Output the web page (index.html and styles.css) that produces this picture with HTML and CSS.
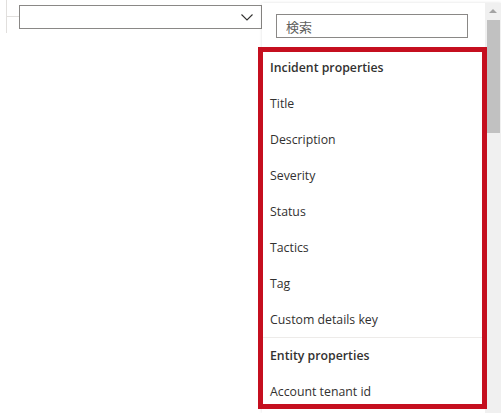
FILE: index.html
```html
<!DOCTYPE html>
<html lang="ja">
<head>
    <meta charset="UTF-8">
    <title>Dropdown</title>
    <link rel="stylesheet" href="styles.css">
</head>
<body>
    <div class="page">
        <div class="left">
            <div class="tree">
                <div class="tree-line"></div>
                <div class="tree-branch"></div>
            </div>
            <div class="select">
                <svg class="chevron" width="12" height="7" viewBox="0 0 12 7">
                    <path d="M0.5 0.5 L6 6 L11.5 0.5" fill="none" stroke="#323130" stroke-width="1.1"/>
                </svg>
            </div>
        </div>
        <div class="panel">
            <div class="content">
                <div class="search">
                    <input type="text" placeholder="検索">
                </div>
                <div class="list">
                    <div class="item header">Incident properties</div>
                    <div class="item">Title</div>
                    <div class="item">Description</div>
                    <div class="item">Severity</div>
                    <div class="item">Status</div>
                    <div class="item">Tactics</div>
                    <div class="item">Tag</div>
                    <div class="item">Custom details key</div>
                    <div class="divider"></div>
                    <div class="item header">Entity properties</div>
                    <div class="item">Account tenant id</div>
                    <div class="highlight"></div>
                </div>
            </div>
            <div class="scrollbar">
                <div class="arrow"></div>
                <div class="thumb"></div>
            </div>
        </div>
    </div>
</body>
</html>
```

FILE: styles.css
```css
body {
    margin: 0;
    font-family: "Open Sans", "Noto Sans CJK JP", sans-serif;
    color: #323130;
    background: #fff;
    overflow: hidden;
    height: 413px;
}
.page {
    display: flex;
    height: 413px;
}
.left {
    width: 262px;
    display: flex;
    align-items: flex-start;
}
.tree {
    width: 19px;
    height: 33px;
    position: relative;
}
.tree-line {
    margin-left: 6px;
    width: 1px;
    height: 33px;
    background: #e1dfdd;
}
.tree-branch {
    position: absolute;
    left: 7px;
    top: 16px;
    width: 12px;
    height: 1px;
    background: #e1dfdd;
}
.select {
    margin-top: 5px;
    width: 239px;
    height: 22px;
    border: 1px solid #8a8886;
    display: flex;
    align-items: center;
    justify-content: flex-end;
    padding-right: 7px;
    box-sizing: content-box;
}
.chevron {
    margin-right: 1px;
}
.panel {
    margin-top: 3px;
    flex: 1;
    display: flex;
    background: #fff;
    box-shadow: 0 0 3px rgba(0, 0, 0, 0.13);
}
.content {
    width: 223px;
}
.search {
    padding: 11px 0 0 14px;
}
.search input {
    width: 192px;
    height: 24px;
    box-sizing: border-box;
    border: 1px solid #8a8886;
    padding: 0 9px;
    font-family: "Noto Sans CJK JP", sans-serif;
    font-size: 13px;
    outline: none;
}
.search input::placeholder {
    color: #605e5c;
}
.list {
    margin-top: 12px;
    position: relative;
}
.item {
    height: 36px;
    line-height: 36px;
    padding-left: 8px;
    font-size: 12.3px;
    white-space: nowrap;
}
.header {
    font-weight: 600;
}
.divider {
    height: 1px;
    background: #edebe9;
    margin-top: -1px;
}
.highlight {
    position: absolute;
    left: -4px;
    right: -2px;
    top: -3px;
    height: 362px;
    border: 5px solid #c50f1f;
    box-sizing: border-box;
}
.scrollbar {
    width: 16px;
    background: #f0f0f0;
    display: flex;
    flex-direction: column;
    align-items: center;
}
.arrow {
    margin-top: 6px;
    width: 0;
    height: 0;
    border-left: 4px solid transparent;
    border-right: 4px solid transparent;
    border-bottom: 4px solid #a3a3a3;
}
.thumb {
    margin-top: 7px;
    width: 13px;
    height: 113px;
    background: #c1c1c1;
}
```
